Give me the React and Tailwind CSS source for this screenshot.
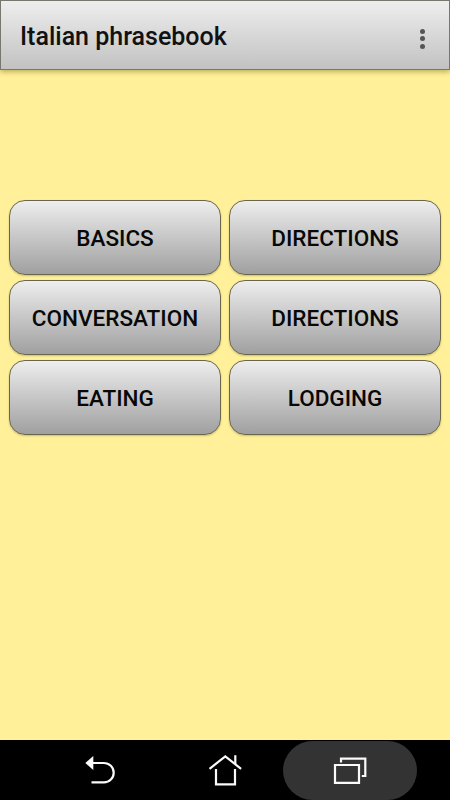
const categories = [
  'BASICS',
  'DIRECTIONS',
  'CONVERSATION',
  'DIRECTIONS',
  'EATING',
  'LODGING',
];

function Header() {
  return (
    <header className="flex h-[70px] shrink-0 items-center justify-between border border-[#77776f] bg-linear-to-b from-[#eeeeee] to-[#c2c2c2] pr-[24px] pl-[19px] shadow-[0_2px_5px_rgba(90,80,0,0.4)]">
      <h1 className="pt-[3px] text-[25px] leading-[30px] font-medium whitespace-nowrap text-[#111111]">
        Italian phrasebook
      </h1>
      <button aria-label="More options" className="flex flex-col gap-[2.5px] pt-[7px]">
        <span className="size-[5px] rounded-full bg-[#555555]" />
        <span className="size-[5px] rounded-full bg-[#555555]" />
        <span className="size-[5px] rounded-full bg-[#555555]" />
      </button>
    </header>
  );
}

function CategoryButton({ label }) {
  return (
    <button className="flex h-[75px] items-center justify-center rounded-[16px] border border-[#69664e] bg-linear-to-b from-[#eeeeee] to-[#a0a0a0] pt-[3px] text-[22.5px] font-medium text-[#080808] shadow-[0_1px_2px_rgba(90,80,0,0.3)]">
      {label}
    </button>
  );
}

function NavigationBar() {
  return (
    <nav className="flex h-[60px] shrink-0 items-center bg-black pl-[33px] text-[#fafafa]">
      <button aria-label="Back" className="flex h-[60px] w-[134px] items-center justify-center">
        <svg width="40" height="40" viewBox="80 750 40 40" fill="none" stroke="currentColor" strokeWidth="2.2">
          <path d="M91 763h13a9.7 9.7 0 0 1 0 19.4H91.5" />
          <path d="M85.3 763l8-7v14z" fill="currentColor" stroke="none" />
        </svg>
      </button>
      <button aria-label="Home" className="flex h-[60px] w-[116px] items-center justify-center">
        <svg width="40" height="40" viewBox="205 750 40 40" fill="none" stroke="currentColor" strokeWidth="2.2">
          <path d="M209.5 768.8L225.3 756.4L241.1 768.8" />
          <path d="M235.3 755.2v8.8" />
          <path d="M216 769V784.4H235V769" />
        </svg>
      </button>
      <button aria-label="Recent apps" className="flex h-[59px] w-[134px] items-center justify-center self-end rounded-full bg-[#333333]">
        <svg width="40" height="40" viewBox="330 750.5 40 40" fill="none" stroke="currentColor" strokeWidth="2.2">
          <path d="M341 762V758.1H365.3V775.5H361.8" />
          <path d="M335 764.5H359V782.4H335z" />
        </svg>
      </button>
    </nav>
  );
}

export default function App() {
  return (
    <div className="flex h-[800px] w-[450px] flex-col overflow-hidden bg-[#fff099] font-['Roboto','Liberation_Sans',sans-serif]">
      <Header />
      <main className="grid flex-1 grid-cols-2 content-start gap-x-2 gap-y-[5px] px-[9px] pt-[130px]">
        {categories.map((label, index) => (
          <CategoryButton key={index} label={label} />
        ))}
      </main>
      <NavigationBar />
    </div>
  );
}
